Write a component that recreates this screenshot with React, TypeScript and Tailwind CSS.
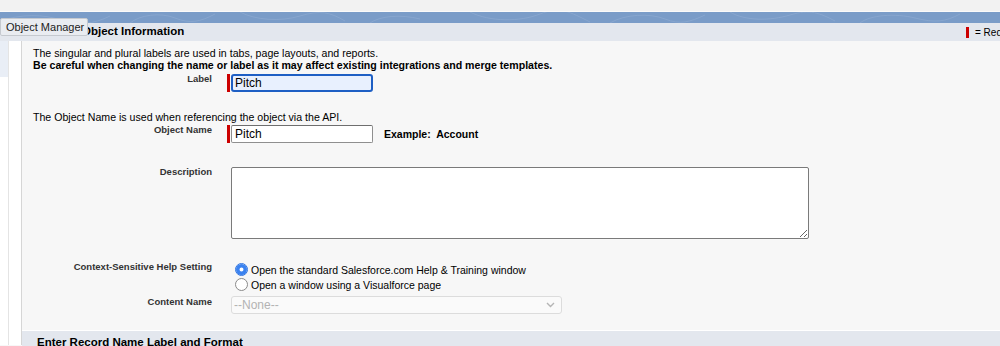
import React from "react"

function Swirls() {
  return (
    <svg className="w-full h-full" viewBox="0 0 1000 11" preserveAspectRatio="none">
      <g fill="none" stroke="#9bb5d8" strokeWidth="0.7" opacity="0.6">
        <path d="M0 9 C 20 2, 45 2, 60 8 S 95 12, 110 4" />
        <path d="M130 11 C 140 3, 160 0, 175 6 S 200 10, 215 2" />
        <path d="M240 0 C 255 8, 280 10, 300 4 S 330 0, 345 9" />
        <path d="M370 11 C 380 4, 400 2, 420 7" />
        <path d="M470 0 C 490 10, 520 10, 540 2 S 570 0, 590 10" />
        <path d="M610 11 C 625 2, 650 1, 665 7 S 690 10, 705 3" />
        <path d="M730 0 C 745 9, 770 9, 790 3 S 820 1, 835 9" />
        <path d="M860 11 C 870 3, 895 1, 915 6 S 945 10, 960 2" />
      </g>
    </svg>
  )
}

function FieldLabel({ children }: { children: React.ReactNode }) {
  return (
    <div className="w-[205px] shrink-0 pr-[15px] text-right text-[9.5px] leading-[10px] font-bold text-[#333]">
      {children}
    </div>
  )
}

function RequiredBar({ h }: { h: string }) {
  return <div className={`w-[3px] ${h} bg-[#c00] mr-[1px] shrink-0`}></div>
}

function Radio({ checked, label }: { checked?: boolean; label: string }) {
  return (
    <label className="flex items-center h-[15px] ml-[8px] gap-[3px] text-[10.5px] text-black">
      <input
        type="radio"
        name="help"
        defaultChecked={checked}
        className="appearance-none m-0 w-[13px] h-[13px] rounded-full border border-[#8a8a8a] bg-white checked:border-[#2f74e0] checked:shadow-[inset_0_0_0_3.5px_#3a82f0]"
      />
      <span>{label}</span>
    </label>
  )
}

export default function App() {
  return (
    <div className="relative w-[1000px] h-[346px] overflow-hidden bg-[#f7f7f7] font-['Liberation_Sans',Arial,sans-serif]">
      {/* top strip + blue band */}
      <div className="h-[12px] bg-[#f2f2f2] border-b border-[#fafafa]"></div>
      <div className="h-[11px] bg-[#7a9cc8]">
        <Swirls />
      </div>

      {/* section header */}
      <div className="h-[18px] bg-[#e3e7ee] flex items-center pl-[36px]">
        <div className="flex-1 text-[11.5px] font-bold text-black whitespace-nowrap">
          Custom Object Information
        </div>
        <div className="w-[34px] shrink-0 overflow-hidden whitespace-nowrap flex items-center">
          <div className="w-[3px] h-[11px] bg-[#c00] shrink-0"></div>
          <span className="ml-[6px] text-[10px] text-black">= Required Information</span>
        </div>
      </div>

      <div className="flex h-[304px]">
        {/* left rail */}
        <div className="w-[22px] shrink-0 flex">
          <div className="w-[9px] bg-white border-r border-[#e4e4e4]">
            <div className="h-[36px] bg-[#e9eef6]"></div>
          </div>
          <div className="flex-1 bg-white border-r border-[#d6d6d6]"></div>
        </div>

        {/* main content */}
        <div className="flex-1 flex flex-col">
          <div className="pt-[6px] text-[10.6px] leading-[12px] text-black">
            <div className="pl-[11px]">
              The singular and plural labels are used in tabs, page layouts, and reports.
            </div>
            <div className="pl-[11px] font-bold">
              Be careful when changing the name or label as it may affect existing integrations and merge templates.
            </div>

            <div className="flex items-start mt-[3px]">
              <FieldLabel>Label</FieldLabel>
              <RequiredBar h="h-[18px]" />
              <div className="w-[142px] h-[18px] rounded-[3px] border-2 border-[#1e5fc4] bg-[#e8f0fe] pl-[2px] text-[12px] leading-[14px] text-black">
                Pitch
              </div>
            </div>

            <div className="pl-[11px] mt-[19px]">
              The Object Name is used when referencing the object via the API.
            </div>

            <div className="flex items-start mt-[2px]">
              <FieldLabel>Object Name</FieldLabel>
              <div className="flex items-center">
                <RequiredBar h="h-[18px]" />
                <div className="w-[142px] h-[18px] rounded-[2px] border border-[#8f8f8f] border-t-[#6e6e6e] bg-white pl-[3px] text-[12px] leading-[16px] text-black">
                  Pitch
                </div>
                <span className="ml-[11px] text-[10.5px] font-bold">Example:&nbsp; Account</span>
              </div>
            </div>

            <div className="flex items-start mt-[24px]">
              <FieldLabel>Description</FieldLabel>
              <textarea className="ml-[4px] w-[578px] h-[72px] bg-white border border-[#7a7a7a] rounded-[2px] outline-none"></textarea>
            </div>

            <div className="flex items-start mt-[23px]">
              <FieldLabel>Context-Sensitive Help Setting</FieldLabel>
              <div className="flex flex-col">
                <Radio checked label="Open the standard Salesforce.com Help & Training window" />
                <Radio label="Open a window using a Visualforce page" />
              </div>
            </div>

            <div className="flex items-start mt-[4px]">
              <div className="pt-[1px]">
                <FieldLabel>Content Name</FieldLabel>
              </div>
              <div className="ml-[4px] w-[331px] h-[18px] rounded-[3px] border border-[#dcdcdc] bg-[#fafafa] flex items-center justify-between pl-[2px] pr-[6px]">
                <span className="text-[12px] text-[#b3b3b3]">--None--</span>
                <svg width="9" height="6" viewBox="0 0 9 6" fill="none" stroke="#b5b5b5" strokeWidth="1.4">
                  <path d="M1 1 L4.5 4.5 L8 1" />
                </svg>
              </div>
            </div>
          </div>

          <div className="mt-[16px] flex-1 bg-[#e3e7ee] border-t border-white pl-[15px] pt-[3px] text-[11.5px] font-bold text-black">
            Enter Record Name Label and Format
          </div>
        </div>
      </div>

      {/* tooltip */}
      <div className="absolute left-0 top-[18px] w-[88px] h-[18px] bg-[#e9ecf1] border border-[#c5c9cf] rounded-[2px] flex items-center pl-[5px] text-[11px] text-[#222] whitespace-nowrap">
        Object Manager
      </div>
    </div>
  )
}
